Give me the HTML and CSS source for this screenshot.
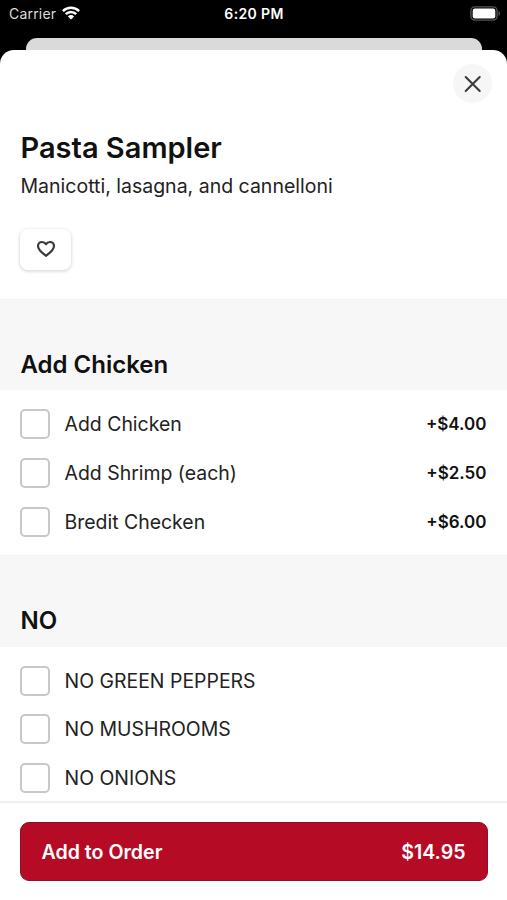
FILE: index.html
```html
<!DOCTYPE html>
<html lang="en">
<head>
<meta charset="utf-8">
<title>Pasta Sampler</title>
<link rel="stylesheet" href="styles.css">
</head>
<body>
<div class="phone">
  <header class="status">
    <div class="carrier"><span>Carrier</span>
      <svg class="wifi" width="18" height="14" viewBox="0 0 18 14" fill="none" stroke="#fff" stroke-width="2.5"><path d="M.9 5.1a11.5 11.5 0 0 1 16.2 0M3.8 8.2a7.3 7.3 0 0 1 10.4 0"/><path d="M9 13.5 5.9 10.4a4.4 4.4 0 0 1 6.2 0Z" fill="#fff" stroke="none"/></svg>
    </div>
    <time>6:20 PM</time>
    <svg class="battery" width="31" height="15" viewBox="0 0 31 15"><rect x=".9" y=".9" width="26.2" height="13.2" rx="4" fill="none" stroke="#555" stroke-width="1.4"/><rect x="2.7" y="2.6" width="22.6" height="9.8" rx="2.2" fill="#fff"/><path d="M28.5 5.2c2.1.7 2.1 3.9 0 4.6Z" fill="#555"/></svg>
  </header>
  <div class="back-sheet"></div>
  <main class="sheet">
    <section class="intro">
      <button class="close" aria-label="Close"><svg width="20" height="20" viewBox="0 0 20 20" fill="none" stroke="#3c3c3c" stroke-width="2.1" stroke-linecap="round"><path d="m2.7 3 14 14M16.7 3l-14 14"/></svg></button>
      <h1>Pasta Sampler</h1>
      <p>Manicotti, lasagna, and cannelloni</p>
      <button class="favorite" aria-label="Favorite"><svg width="20" height="18" viewBox="0 0 20 18" fill="none" stroke="#3a3a3a" stroke-width="2.2" stroke-linejoin="round"><path d="M10 15.8C6.9 13.5 2 10.3 2 6.1 2 3.6 3.8 2 6 2c1.7 0 3.1.8 4 2.2C10.9 2.8 12.3 2 14 2c2.2 0 4 1.6 4 4.1 0 4.2-4.9 7.4-8 9.7Z"/></svg></button>
    </section>
    <h2>Add Chicken</h2>
    <ul>
      <li><span class="box"></span><span class="name">Add Chicken</span><span class="price">+$4.00</span></li>
      <li><span class="box"></span><span class="name">Add Shrimp (each)</span><span class="price">+$2.50</span></li>
      <li><span class="box"></span><span class="name">Bredit Checken</span><span class="price">+$6.00</span></li>
    </ul>
    <h2>NO</h2>
    <ul class="last">
      <li><span class="box"></span><span class="name">NO GREEN PEPPERS</span></li>
      <li><span class="box"></span><span class="name">NO MUSHROOMS</span></li>
      <li><span class="box"></span><span class="name">NO ONIONS</span></li>
    </ul>
    <footer>
      <button class="order"><span>Add to Order</span><span class="total">$14.95</span></button>
    </footer>
  </main>
</div>
</body>
</html>
```
FILE: styles.css
```css
* { box-sizing: border-box; }
body { margin: 0; background: #000; color: #111; font-family: Inter, "Liberation Sans", sans-serif; }
h1, h2, p, ul { margin: 0; padding: 0; }
button { font: inherit; border: 0; padding: 0; }
svg { display: block; }
.phone { width: 507px; height: 900px; overflow: hidden; display: flex; flex-direction: column; }
.status { height: 38px; flex: none; display: grid; grid-template-columns: 1fr auto 1fr; align-items: start; padding: 5px 6px 0 9px; color: #fff; font-size: 14px; line-height: 18px; }
.carrier { display: flex; gap: 6px; color: #ddd; letter-spacing: .2px; }
.wifi { margin-top: 1px; }
.status time { font-weight: 600; letter-spacing: .35px; margin-right: 2px; }
.battery { justify-self: end; margin-top: 1px; }
.back-sheet { height: 12px; flex: none; margin: 0 25px 0 26px; background: #dadada; border-radius: 11px 11px 0 0; }
.sheet { flex: 1; background: #fff; border-radius: 14px 14px 0 0; display: flex; flex-direction: column; }
.intro { height: 248.5px; flex: none; padding: 14px 15px 0 20px; display: flex; flex-direction: column; align-items: flex-start; }
.close { width: 39px; height: 39px; flex: none; align-self: flex-end; border-radius: 50%; background: #f6f6f6; display: grid; place-items: center; }
h1 { font-size: 29px; line-height: 36px; font-weight: 600; margin: 27px 0 0 .5px; }
.intro p { font-size: 19.5px; line-height: 26px; margin: 7px 0 0 .5px; color: #222; }
.favorite { width: 51px; height: 41px; margin: 29.5px 0 0 .4px; padding-bottom: 1px; border-radius: 8px; background: #fff; box-shadow: 0 1px 3px 1px rgba(0,0,0,.13); display: grid; place-items: center; }
h2 { height: 91.5px; flex: none; padding: 50px 20.5px 0; background: #f7f7f7; border-top: 1px solid #f2f2f2; font-size: 24px; line-height: 30px; font-weight: 600; }
ul { height: 165px; flex: none; padding: 9.8px 20.5px 0 20px; list-style: none; }
.last { height: 154px; }
li { height: 48.8px; display: flex; align-items: center; }
.box { width: 30px; height: 30px; border: 2px solid #c8c8c8; border-radius: 5px; margin-right: 14.5px; }
.name { font-size: 19.45px; line-height: 26px; color: #222; }
.price { margin-left: auto; font-size: 17px; font-weight: 600; }
footer { flex: 1; border-top: 2px solid #f0f0f0; background: #fff; padding: 19px 19px 0 20px; }
.order { width: 100%; height: 59px; display: flex; align-items: center; justify-content: space-between; padding: 2px 21.5px 0 20.5px; border: 1px solid #8a102c; border-radius: 9px; background: #b50b25; color: #fff; font-size: 19.6px; font-weight: 600; }
```
